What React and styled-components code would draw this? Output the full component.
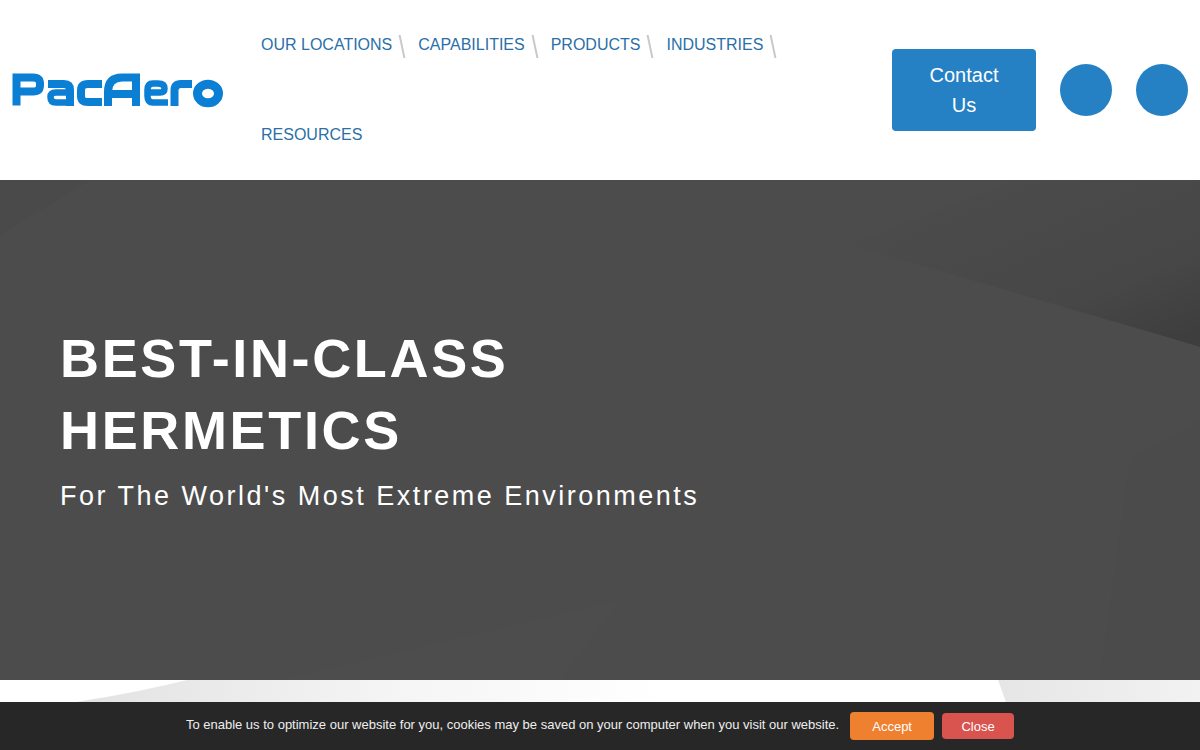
import styled, { createGlobalStyle } from 'styled-components'

const blue = '#2581c4'

const GlobalStyle = createGlobalStyle`
    html, body {
        margin: 0;
        padding: 0;
        height: 100%;
        overflow: hidden;
        background: #fff;
        font-family: "Liberation Sans", Arial, sans-serif;
    }
`

const Page = styled.div`
    display: flex;
    flex-direction: column;
    height: 100vh;
`

const Header = styled.header`
    display: flex;
    align-items: center;
    height: 180px;
    flex-shrink: 0;
    background: #fff;
`

const LogoBox = styled.a`
    display: flex;
    width: 261px;
    padding: 2px 0 0 12px;
    box-sizing: border-box;
    flex-shrink: 0;
`

const Nav = styled.nav`
    display: flex;
    flex-wrap: wrap;
    width: 560px;
    flex-shrink: 0;
`

const NavItem = styled.a`
    display: flex;
    align-items: center;
    height: 90px;
    font-size: 16px;
    color: #2a6fa8;
`

const NavSlash = styled.span`
    width: 2px;
    height: 23px;
    margin: 2px 15px 0 9px;
    background: #c8c8c8;
    transform: skewX(12deg);
`

const Actions = styled.div`
    display: flex;
    align-items: center;
    gap: 24px;
    margin-left: auto;
    padding-right: 12px;
`

const ContactButton = styled.a`
    width: 144px;
    height: 82px;
    padding: 11px 30px;
    box-sizing: border-box;
    border-radius: 4px;
    background: ${blue};
    color: #fff;
    font-size: 20px;
    line-height: 30px;
    text-align: center;
`

const RoundButton = styled.span`
    width: 52px;
    height: 52px;
    border-radius: 50%;
    background: ${blue};
`

const Hero = styled.section`
    position: relative;
    display: flex;
    flex-direction: column;
    height: 500px;
    padding: 142px 0 0 60px;
    box-sizing: border-box;
    flex-shrink: 0;
    background: #4c4c4c;
    overflow: hidden;
`

const Shapes = styled.svg`
    position: absolute;
    inset: 0;
    width: 100%;
    height: 100%;
`

const HeroTitle = styled.h1`
    position: relative;
    width: 560px;
    margin: 0;
    color: #fff;
    font-size: 54px;
    font-weight: 700;
    line-height: 72px;
    letter-spacing: 2.65px;
`

const HeroSub = styled.p`
    position: relative;
    margin: 10px 0 0;
    color: #fff;
    font-size: 27px;
    line-height: 40px;
    letter-spacing: 2.5px;
`

const Strip = styled.div`
    position: relative;
    flex: 1;
    background: #fff;
    overflow: hidden;
`

const CookieBar = styled.div`
    display: flex;
    align-items: center;
    justify-content: center;
    gap: 8px;
    height: 48px;
    flex-shrink: 0;
    background: #272727;
`

const CookieText = styled.span`
    margin: 0 3px 4px 0;
    color: #eee;
    font-size: 13px;
`

const CookieButton = styled.button`
    width: ${p => p.$w}px;
    height: ${p => p.$h}px;
    padding: 0;
    border: 0;
    border-radius: 4px;
    background: ${p => p.$bg};
    color: #fff;
    font-family: inherit;
    font-size: 13px;
`

function Logo() {
    return (
        <svg width="212" height="38" viewBox="12 72 212 38" fill="none" stroke="#0a7fd4" strokeWidth="8">
            <path d="M16.500 105.500V77.500H33Q40 77.500 40 84V85Q40 91.500 33 91.500H20" />
            <path d="M48 84H64Q70 84 70 90V106" />
            <path d="M70 92.500H56Q50.500 92.500 50.500 97Q50.500 102.500 56 102.500H70" strokeWidth="6.500" />
            <path d="M102 84H88Q81 84 81 90.500V96Q81 102 88 102H102" />
            <path d="M108 106V92Q108 77.500 122 77.500H136V106M112 94H136" />
            <path d="M168 102.500H153Q147.500 102.500 147.500 96V90Q147.500 83.500 153 83.500H158Q164.500 83.500 164.500 88.500Q164.500 92.500 160 92.500H150" strokeWidth="6.500" />
            <path d="M174.500 106V90.500Q174.500 84 181 84H192" />
            <ellipse cx="208" cy="93.500" rx="10.500" ry="9.250" strokeWidth="9" />
        </svg>
    )
}

const navLinks = ['OUR LOCATIONS', 'CAPABILITIES', 'PRODUCTS', 'INDUSTRIES']

export default function App() {
    return (
        <Page>
            <GlobalStyle />
            <Header>
                <LogoBox><Logo /></LogoBox>
                <Nav>
                    {navLinks.map(link => (
                        <NavItem key={link}>{link}<NavSlash /></NavItem>
                    ))}
                    <NavItem>RESOURCES</NavItem>
                </Nav>
                <Actions>
                    <ContactButton>Contact Us</ContactButton>
                    <RoundButton />
                    <RoundButton />
                </Actions>
            </Header>
            <Hero>
                <Shapes viewBox="0 0 1200 500" preserveAspectRatio="none">
                    <defs>
                        <linearGradient id="heroDark" x1="0.2" y1="0" x2="1" y2="0.9">
                            <stop offset="0" stopColor="#4c4c4c" />
                            <stop offset="0.7" stopColor="#474747" />
                            <stop offset="1" stopColor="#3e3e3e" />
                        </linearGradient>
                    </defs>
                    <path d="M850 65L1160 155L1200 167V0H1015Z" fill="url(#heroDark)" />
                    <path d="M0 0H90L0 55Z" fill="#4a4a4a" />
                    <path d="M1130 280L1200 240V500H1100Z" fill="#4b4b4b" />
                    <path d="M280 500L620 420L560 500Z" fill="#4d4d4d" />
                </Shapes>
                <HeroTitle>BEST-IN-CLASS HERMETICS</HeroTitle>
                <HeroSub>For The World's Most Extreme Environments</HeroSub>
            </Hero>
            <Strip>
                <Shapes viewBox="0 0 1200 22" preserveAspectRatio="none">
                    <defs>
                        <linearGradient id="stripFade" x1="0" y1="0" x2="1" y2="0">
                            <stop offset="0" stopColor="#e2e2e2" />
                            <stop offset="0.55" stopColor="#f5f5f5" />
                            <stop offset="1" stopColor="#ffffff" />
                        </linearGradient>
                        <linearGradient id="stripRight" x1="0" y1="0" x2="1" y2="0">
                            <stop offset="0" stopColor="#e6e6e6" />
                            <stop offset="1" stopColor="#f2f2f2" />
                        </linearGradient>
                    </defs>
                    <path d="M76 22Q135 13 187 0H660V22Z" fill="url(#stripFade)" />
                    <path d="M998 0H1200V22H1006Z" fill="url(#stripRight)" />
                </Shapes>
            </Strip>
            <CookieBar>
                <CookieText>To enable us to optimize our website for you, cookies may be saved on your computer when you visit our website.</CookieText>
                <CookieButton $w={84} $h={28} $bg="#ef8030">Accept</CookieButton>
                <CookieButton $w={72} $h={26} $bg="#d9534f">Close</CookieButton>
            </CookieBar>
        </Page>
    )
}
